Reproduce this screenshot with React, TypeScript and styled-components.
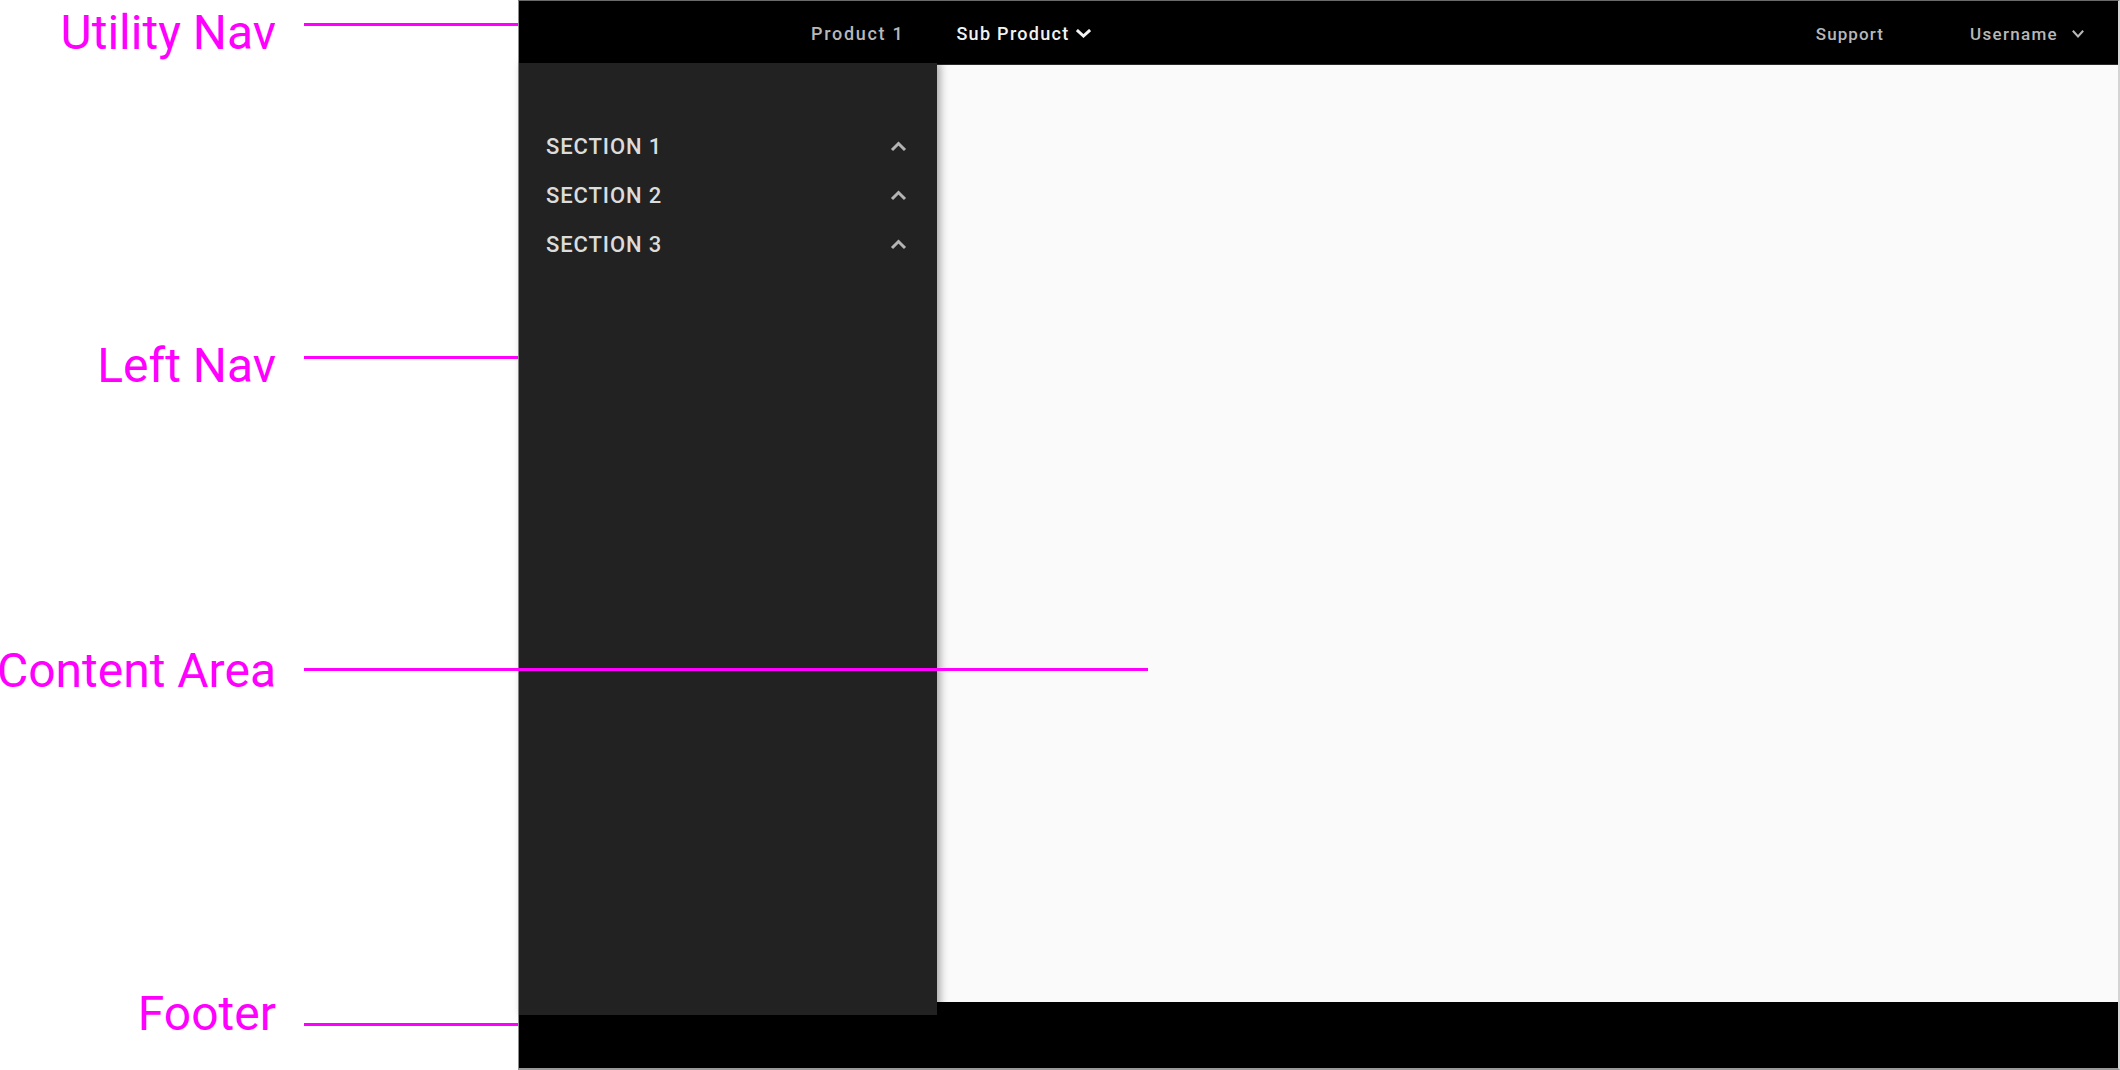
import React from "react";
import styled, { createGlobalStyle } from "styled-components";

const GlobalStyle = createGlobalStyle`
  html, body {
    margin: 0;
    padding: 0;
    background: #ffffff;
    font-family: Roboto, "Liberation Sans", Arial, sans-serif;
  }
  * { box-sizing: border-box; }
`;

const Page = styled.div`
  position: relative;
  display: flex;
  width: 2120px;
  height: 1070px;
  background: #ffffff;
  overflow: hidden;
`;

const Gutter = styled.div`
  width: 518px;
  flex-shrink: 0;
`;

const Frame = styled.div`
  flex: 1;
  display: grid;
  grid-template-rows: 64px 1fr 66px;
  border-top: 1px solid #6a6a6a;
  border-left: 1px solid #8c8c8c;
  border-right: 2px solid #d4d4d4;
  border-bottom: 2px solid #9a9a9a;
  background: #000;
`;

const TopBar = styled.header`
  display: flex;
  align-items: center;
  background: #000000;
  padding: 2px 34px 0 292px;
  border-bottom: 1px solid #2a2a2a;
`;

const NavGroup = styled.nav<{ $gap: number }>`
  display: flex;
  align-items: center;
  gap: ${(p) => p.$gap}px;
`;

const Spacer = styled.div`
  flex: 1;
`;

const TopLink = styled.span<{ $active?: boolean; $size: number; $spacing: number; $iconGap?: number }>`
  display: inline-flex;
  align-items: center;
  gap: ${(p) => p.$iconGap ?? 6}px;
  font-size: ${(p) => p.$size}px;
  font-weight: 500;
  letter-spacing: ${(p) => p.$spacing}px;
  color: ${(p) => (p.$active ? "#f2f2f2" : "#b8b8b8")};
  white-space: nowrap;
`;

const Body = styled.div`
  display: flex;
  min-height: 0;
`;

const LeftNav = styled.aside`
  position: relative;
  z-index: 2;
  width: 418px;
  flex-shrink: 0;
  margin-top: -2px;
  margin-bottom: -13px;
  background: #222222;
  box-shadow: 3px 0 8px rgba(0, 0, 0, 0.35);
  padding: 59px 30px 0 27px;
  display: flex;
  flex-direction: column;
`;

const SectionRow = styled.div`
  height: 49px;
  display: flex;
  align-items: center;
  justify-content: space-between;
`;

const SectionLabel = styled.span`
  font-size: 22px;
  font-weight: 500;
  letter-spacing: 0.9px;
  color: #dcdcdc;
`;

const Content = styled.main`
  flex: 1;
  background: #fafafa;
`;

const Footer = styled.footer`
  background: #000000;
`;

const Label = styled.div<{ $top: number }>`
  position: absolute;
  z-index: 5;
  top: ${(p) => p.$top}px;
  right: ${2120 - 276}px;
  font-size: 48px;
  line-height: 48px;
  font-weight: 400;
  color: #ff00ff;
  white-space: nowrap;
`;

const Leader = styled.div<{ $y: number; $from: number; $to: number }>`
  position: absolute;
  z-index: 5;
  top: ${(p) => p.$y - 1.5}px;
  left: ${(p) => p.$from}px;
  width: ${(p) => p.$to - p.$from}px;
  height: 3px;
  background: #ff00ff;
`;

const ChevronDown = ({ w, h, stroke, color }: { w: number; h: number; stroke: number; color: string }) => (
  <svg width={w} height={h} viewBox={`0 0 ${w} ${h}`} fill="none">
    <polyline
      points={`${stroke / 2 + 0.5},${stroke / 2 + 0.5} ${w / 2},${h - stroke / 2 - 0.5} ${w - stroke / 2 - 0.5},${stroke / 2 + 0.5}`}
      stroke={color}
      strokeWidth={stroke}
      strokeLinecap="square"
      strokeLinejoin="miter"
    />
  </svg>
);

const ChevronUp = () => (
  <svg width="17" height="11" viewBox="0 0 17 11" fill="none">
    <polyline points="2,9 8.5,2.5 15,9" stroke="#b4b4b4" strokeWidth="3" strokeLinejoin="miter" />
  </svg>
);

const callouts = [
  { label: "Utility Nav", labelTop: 9, lineY: 24, to: 518 },
  { label: "Left Nav", labelTop: 342, lineY: 357, to: 518 },
  { label: "Content Area", labelTop: 647, lineY: 669, to: 1148 },
  { label: "Footer", labelTop: 990, lineY: 1024, to: 518 },
];

const sections = ["SECTION 1", "SECTION 2", "SECTION 3"];

export default function App() {
  return (
    <>
      <GlobalStyle />
      <Page>
        <Gutter />
        <Frame>
          <TopBar>
            <NavGroup $gap={52}>
              <TopLink $size={18} $spacing={1.7}>Product 1</TopLink>
              <TopLink $active $size={18} $spacing={1.3}>
                Sub Product
                <ChevronDown w={15} h={9} stroke={3} color="#f2f2f2" />
              </TopLink>
            </NavGroup>
            <Spacer />
            <NavGroup $gap={86}>
              <TopLink $size={17} $spacing={1.1}>Support</TopLink>
              <TopLink $size={17} $spacing={1.3} $iconGap={14}>
                Username
                <ChevronDown w={12} h={8} stroke={2} color="#b8b8b8" />
              </TopLink>
            </NavGroup>
          </TopBar>
          <Body>
            <LeftNav>
              {sections.map((s) => (
                <SectionRow key={s}>
                  <SectionLabel>{s}</SectionLabel>
                  <ChevronUp />
                </SectionRow>
              ))}
            </LeftNav>
            <Content />
          </Body>
          <Footer />
        </Frame>
        {callouts.map((c) => (
          <React.Fragment key={c.label}>
            <Label $top={c.labelTop}>{c.label}</Label>
            <Leader $y={c.lineY} $from={304} $to={c.to} />
          </React.Fragment>
        ))}
      </Page>
    </>
  );
}
